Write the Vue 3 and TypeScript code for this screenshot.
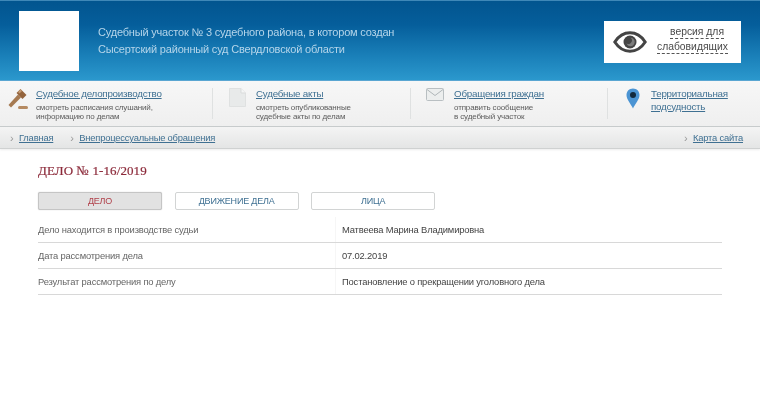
<script setup lang="ts">
interface NavItem { title: string[]; sub: string[]; icon: string }
const nav: NavItem[] = [
  { title: ['Судебное делопроизводство'], sub: ['смотреть расписания слушаний,', 'информацию по делам'], icon: 'gavel' },
  { title: ['Судебные акты'], sub: ['смотреть опубликованные', 'судебные акты по делам'], icon: 'doc' },
  { title: ['Обращения граждан'], sub: ['отправить сообщение', 'в судебный участок'], icon: 'mail' },
  { title: ['Территориальная', 'подсудность'], sub: [], icon: 'pin' },
]
const tabs = ['ДЕЛО', 'ДВИЖЕНИЕ ДЕЛА', 'ЛИЦА']
const rows = [
  ['Дело находится в производстве судьи', 'Матвеева Марина Владимировна'],
  ['Дата рассмотрения дела', '07.02.2019'],
  ['Результат рассмотрения по делу', 'Постановление о прекращении уголовного дела'],
]
</script>

<template>
  <div class="page">
    <header class="top">
      <div class="logo"></div>
      <div class="court">
        <div>Судебный участок № 3 судебного района, в котором создан</div>
        <div>Сысертский районный суд Свердловской области</div>
      </div>
      <div class="vision">
        <svg class="eye" width="34" height="22" viewBox="0 0 34 22">
          <path d="M1.800 11C6 4.500 11 1.800 17 1.800S28 4.500 32.200 11C28 17.500 23 20.200 17 20.200S6 17.500 1.800 11Z" fill="#fff" stroke="#444" stroke-width="3" />
          <circle cx="17" cy="11" r="6.500" fill="#444" />
          <path d="M17.500 6.800a4.200 4.200 0 0 1 0 8.400a4.200 4.200 0 0 1-4-3a3.200 3.200 0 0 0 4-5.400Z" fill="#7c7c7c" />
        </svg>
        <div class="vision-text">
          <span>версия для</span>
          <span>слабовидящих</span>
        </div>
      </div>
    </header>

    <nav class="menu">
      <div v-for="item in nav" :key="item.icon" class="menu-item" :class="'is-' + item.icon">
        <div class="menu-icon">
          <svg v-if="item.icon === 'gavel'" width="21" height="22" viewBox="0 0 21 22">
            <path d="M10 6.500 13 9.500 3 19.500.5 17Z" fill="#a67a52" />
            <path d="M8.500 5 12.500 1 18.500 7 14.500 11Z" fill="#94643c" />
            <path d="M10 4 12.500 1.500 14 3 11.500 5.500Z" fill="#c59c74" />
            <rect x="10" y="18" width="10" height="3" rx="1.500" fill="#b58a62" />
          </svg>
          <svg v-else-if="item.icon === 'doc'" width="17" height="19" viewBox="0 0 17 19">
            <path d="M.5.500H12L16.500 5v13.500H.5Z" fill="#e8eaea" stroke="#dfe1e1" />
            <path d="M12 .5V5h4.500" fill="#f5f6f6" stroke="#d9dbdb" />
          </svg>
          <svg v-else-if="item.icon === 'mail'" width="18" height="13" viewBox="0 0 18 13">
            <rect x=".5" y=".5" width="17" height="12" rx="1" fill="#eceeee" stroke="#b9bfc2" />
            <path d="M1 1.500 9 7.500l8-6" fill="none" stroke="#b0b6b9" />
          </svg>
          <svg v-else width="14" height="21" viewBox="0 0 14 21">
            <path d="M7 .5C3.300.5.500 3.300.500 7c0 4.500 4.500 9 6.500 13.500C9 16 13.500 11.500 13.500 7 13.500 3.300 10.700.5 7 .5Z" fill="#4b94d3" />
            <circle cx="7" cy="7" r="3" fill="#12293d" />
          </svg>
        </div>
        <div class="menu-text">
          <div class="menu-title">
            <div v-for="t in item.title" :key="t"><a>{{ t }}</a></div>
          </div>
          <div v-if="item.sub.length" class="menu-sub">
            <div v-for="s in item.sub" :key="s">{{ s }}</div>
          </div>
        </div>
      </div>
    </nav>

    <div class="crumbs">
      <div class="crumbs-left">
        <span class="crumb"><i>›</i><a>Главная</a></span>
        <span class="crumb"><i>›</i><a>Внепроцессуальные обращения</a></span>
      </div>
      <span class="crumb"><i>›</i><a>Карта сайта</a></span>
    </div>

    <main class="content">
      <h1>ДЕЛО № 1-16/2019</h1>
      <div class="tabs">
        <div v-for="(t, i) in tabs" :key="t" class="tab" :class="{ active: i === 0 }">{{ t }}</div>
      </div>
      <div class="table">
        <div v-for="r in rows" :key="r[0]" class="row">
          <div class="label">{{ r[0] }}</div>
          <div class="value">{{ r[1] }}</div>
        </div>
      </div>
    </main>
  </div>
</template>

<style>
html, body { margin: 0; background: #fff; }
</style>

<style scoped>
.page {
  width: 760px;
  height: 416px;
  overflow: hidden;
  background: #fff;
  font-family: "Liberation Sans", Arial, sans-serif;
  filter: blur(0.4px);
}
.top {
  box-sizing: border-box;
  height: 81px;
  display: flex;
  align-items: center;
  padding: 1px 19px 0;
  background: linear-gradient(#02558f 0%, #055e9b 30%, #1a80b9 70%, #2b98cd 100%);
  border-top: 1px solid #3f88b8;
  border-bottom: 1px solid #5aa6d2;
}
.logo { width: 60px; height: 60px; background: #fff; flex: none; }
.court {
  margin-left: 19px;
  font-size: 11px;
  letter-spacing: -0.19px;
  line-height: 17px;
  color: #b5d5ea;
  white-space: nowrap;
}
.vision {
  box-sizing: border-box;
  margin-left: auto;
  margin-top: 1px;
  width: 137px;
  height: 42px;
  background: #fff;
  display: flex;
  align-items: center;
  padding: 0 13px 0 9px;
}
.eye { flex: none; }
.vision-text {
  margin-left: auto;
  margin-top: -4px;
  display: flex;
  flex-direction: column;
  align-items: flex-end;
  gap: 2px;
  font-size: 10.350px;
  line-height: 12px;
  color: #4a4a4a;
}
.vision-text span { border-bottom: 1px dashed #555; }
.vision-text span:first-child { margin-right: 4px; }
.menu {
  box-sizing: border-box;
  height: 46px;
  display: flex;
  padding-top: 7px;
  background: linear-gradient(#f7f7f7, #efefef);
  border-bottom: 1px solid #c8cccd;
}
.menu-item {
  box-sizing: border-box;
  height: 31px;
  display: flex;
  border-right: 1px solid #dfe1e1;
}
.is-gavel { width: 213px; padding-left: 8px; }
.is-doc { width: 198px; padding-left: 16px; }
.is-mail { width: 197px; padding-left: 15px; }
.is-pin { width: 152px; padding-left: 18px; border-right: 0; }
.menu-icon { flex: none; height: 22px; }
.is-gavel .menu-icon { width: 28px; }
.is-doc .menu-icon { width: 27px; }
.is-mail .menu-icon { width: 28px; }
.is-pin .menu-icon { width: 25px; }
svg { display: block; }
.menu-text { margin-top: -1px; }
.menu-title {
  font-size: 9.800px;
  letter-spacing: -0.24px;
  line-height: 14px;
  color: #3f7092;
  white-space: nowrap;
}
.menu-title a, .crumb a { text-decoration: underline; }
.is-pin .menu-title { line-height: 12.500px; padding-top: 1px; }
.menu-sub {
  margin-top: 3px;
  font-size: 8px;
  letter-spacing: -0.14px;
  line-height: 8.500px;
  color: #5c5c5c;
  white-space: nowrap;
}
.crumbs {
  box-sizing: border-box;
  height: 22px;
  display: flex;
  align-items: center;
  justify-content: space-between;
  padding: 0 17px 0 10px;
  background: linear-gradient(#f4f4f4, #e4e5e5);
  border-bottom: 1px solid #cfd1d1;
  box-shadow: 0 1px 2px rgba(0, 0, 0, 0.08);
  font-size: 9.400px;
  letter-spacing: -0.2px;
  color: #3f7092;
}
.crumbs-left { display: flex; gap: 17px; }
.crumb { display: inline-flex; align-items: center; white-space: nowrap; }
.crumb i { font-style: normal; color: #999; width: 9px; font-size: 11px; line-height: 10px; }
.content { padding: 14px 38px 0; }
h1 {
  margin: 0;
  font-family: "Liberation Serif", "DejaVu Serif", serif;
  font-size: 13px;
  line-height: 16px;
  font-weight: 400;
  color: #8c2a3a;
  letter-spacing: 0.1px;
  -webkit-text-stroke: 0.2px #8c2a3a;
}
.tabs { display: flex; gap: 12.600px; margin-top: 13px; }
.tab {
  box-sizing: border-box;
  width: 124px;
  height: 18px;
  text-align: center;
  font-size: 9px;
  letter-spacing: -0.2px;
  line-height: 17px;
  color: #3f7092;
  background: #fff;
  border: 1px solid #d2d4d4;
  border-radius: 2px;
}
.tab.active {
  color: #b0404a;
  background: #e2e2e2;
  border-color: #c5c5c5;
  box-shadow: 0 0 1px rgba(0, 0, 0, 0.3);
}
.table { width: 684px; margin-top: 7px; }
.row {
  box-sizing: border-box;
  height: 26px;
  display: flex;
  align-items: stretch;
  border-bottom: 1px solid #d8d8d8;
  font-size: 9.400px;
  letter-spacing: -0.17px;
  line-height: 25px;
  color: #666;
}
.label { width: 297px; border-right: 1px solid #f6f6f6; }
.value { margin-left: 6px; color: #444; }
</style>
